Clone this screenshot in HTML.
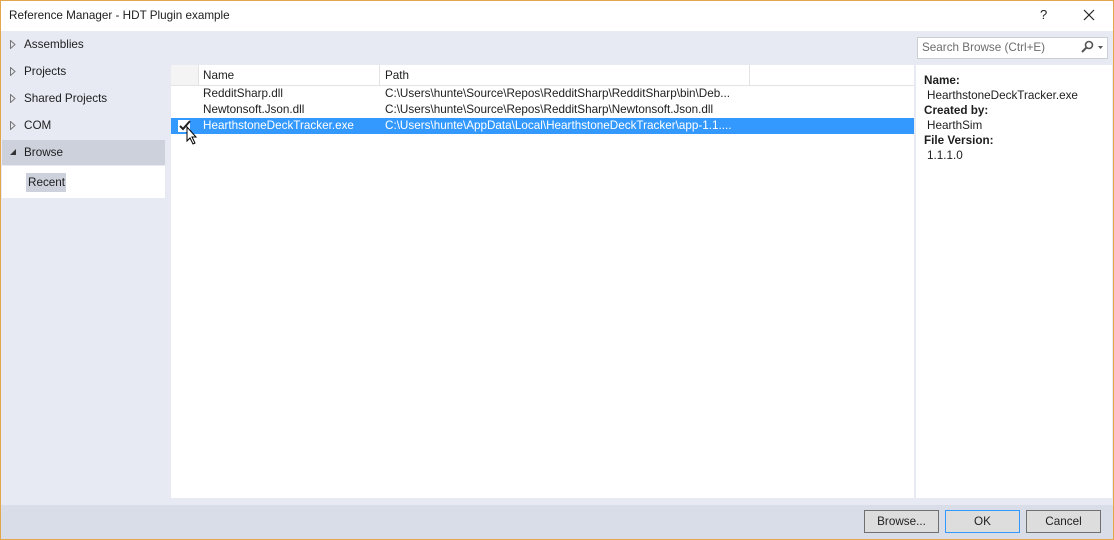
<!DOCTYPE html>
<html><head><style>
*{margin:0;padding:0;box-sizing:border-box}
body{width:1114px;height:540px;overflow:hidden;font-family:"Liberation Sans",sans-serif;font-size:11.7px;color:#1e1e1e;background:#e7eaf3;position:relative}
.a{position:absolute}
.border{position:absolute;left:0;top:0;width:1114px;height:540px;border:1px solid #e3a64d;pointer-events:none}
.tri{position:absolute;left:10px}
.btn{top:510px;width:75px;height:23px;background:#dddddd;border:1px solid #707070;text-align:center;line-height:21px}
.row{position:absolute;left:171px;width:743px;height:16px;line-height:16px}
.row span{position:absolute}
</style></head><body>
<div class="a" style="left:0;top:0;width:1114px;height:31px;background:#fff"></div>
<div class="a" style="left:9px;top:9px">Reference Manager - HDT Plugin example</div>
<div class="a" style="left:1040px;top:7px;font-size:13px">?</div>
<svg class="a" style="left:1083px;top:9px" width="12" height="12"><path d="M1 1L11 11M11 1L1 11" stroke="#222" stroke-width="1.2"/></svg>

<svg class="tri" style="top:40px" width="6" height="9"><path d="M0.5 0.5v8l4.5-4z" fill="none" stroke="#777"/></svg><div class="a" style="left:24px;top:38px">Assemblies</div>
<svg class="tri" style="top:67px" width="6" height="9"><path d="M0.5 0.5v8l4.5-4z" fill="none" stroke="#777"/></svg><div class="a" style="left:24px;top:65px">Projects</div>
<svg class="tri" style="top:94px" width="6" height="9"><path d="M0.5 0.5v8l4.5-4z" fill="none" stroke="#777"/></svg><div class="a" style="left:24px;top:92px">Shared Projects</div>
<svg class="tri" style="top:121px" width="6" height="9"><path d="M0.5 0.5v8l4.5-4z" fill="none" stroke="#777"/></svg><div class="a" style="left:24px;top:119px">COM</div>
<div class="a" style="left:2px;top:140px;width:163px;height:25px;background:#cdd1dc"></div>
<div class="a" style="left:10px;top:149px;width:0;height:0;border-left:6px solid transparent;border-bottom:6px solid #333"></div>
<div class="a" style="left:24px;top:146px">Browse</div>
<div class="a" style="left:2px;top:166px;width:163px;height:32px;background:#fff"></div>
<div class="a" style="left:26px;top:173px;width:40px;height:19px;background:#cdd1dc"></div>
<div class="a" style="left:28px;top:176px">Recent</div>

<div class="a" style="left:917px;top:37px;width:191px;height:22px;background:#fff;border:1px solid #ccced6"></div>
<div class="a" style="left:922px;top:41px;color:#6d6d6d">Search Browse (Ctrl+E)</div>
<svg class="a" style="left:1080px;top:40px" width="26" height="14"><circle cx="9" cy="5" r="3.5" fill="none" stroke="#555" stroke-width="1.6"/><path d="M6.5 7.5L2 12" stroke="#555" stroke-width="2"/><path d="M18 6h5l-2.5 3z" fill="#555"/></svg>

<div class="a" style="left:171px;top:65px;width:743px;height:433px;background:#fff"></div>
<div class="a" style="left:171px;top:65px;width:743px;height:21px;background:#fff;border-bottom:1px solid #e3e3e3"></div>
<div class="a" style="left:171px;top:65px;width:27px;height:20px;background:#f4f4f4"></div>
<div class="a" style="left:198px;top:65px;width:1px;height:20px;background:#e3e3e3"></div>
<div class="a" style="left:379px;top:65px;width:1px;height:20px;background:#e3e3e3"></div>
<div class="a" style="left:749px;top:65px;width:1px;height:20px;background:#e3e3e3"></div>
<div class="a" style="left:203px;top:69px">Name</div>
<div class="a" style="left:385px;top:69px">Path</div>
<div class="row" style="top:86px"><span style="left:32px">RedditSharp.dll</span><span style="left:214px">C:\Users\hunte\Source\Repos\RedditSharp\RedditSharp\bin\Deb...</span></div>
<div class="row" style="top:102px"><span style="left:32px">Newtonsoft.Json.dll</span><span style="left:214px">C:\Users\hunte\Source\Repos\RedditSharp\Newtonsoft.Json.dll</span></div>
<div class="row" style="top:118px;background:#3399ff;color:#fff"><span style="left:32px">HearthstoneDeckTracker.exe</span><span style="left:214px">C:\Users\hunte\AppData\Local\HearthstoneDeckTracker\app-1.1....</span></div>
<div class="a" style="left:178px;top:120px;width:12px;height:12px;background:#fff;border:1px solid #fff"></div>
<svg class="a" style="left:178px;top:119px" width="14" height="13"><path d="M2 7l3 3 7-8" stroke="#222" stroke-width="2" fill="none"/></svg>
<svg class="a" style="left:186px;top:126px" width="12" height="20"><path d="M1 1v14l3-3 3 6 2-1-3-6h4z" fill="#fff" stroke="#000"/></svg>

<div class="a" style="left:916px;top:65px;width:196px;height:433px;background:#fff"></div>
<div class="a" style="left:924px;top:74px;font-weight:bold">Name:</div>
<div class="a" style="left:927px;top:89px">HearthstoneDeckTracker.exe</div>
<div class="a" style="left:924px;top:104px;font-weight:bold">Created by:</div>
<div class="a" style="left:927px;top:119px">HearthSim</div>
<div class="a" style="left:924px;top:134px;font-weight:bold">File Version:</div>
<div class="a" style="left:927px;top:149px">1.1.1.0</div>

<div class="a" style="left:0;top:505px;width:1114px;height:35px;background:#d9dde8"></div>
<div class="a btn" style="left:864px">Browse...</div>
<div class="a btn" style="left:945px;border-color:#3399ff">OK</div>
<div class="a btn" style="left:1026px">Cancel</div>
<div class="border"></div>
</body></html>
